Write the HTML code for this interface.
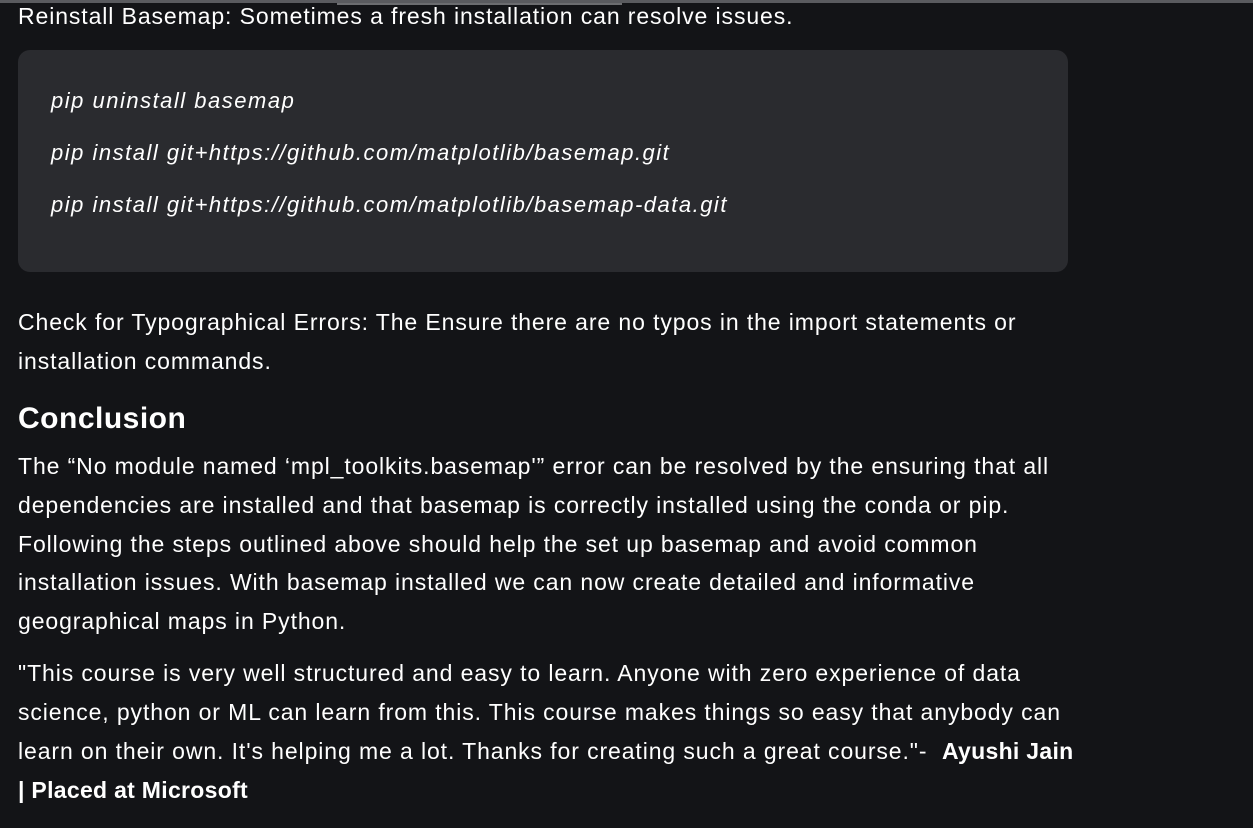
<!DOCTYPE html>
<html><head><style>
html,body{margin:0;padding:0;background:#131417;width:1253px;height:828px;overflow:hidden}
body{font-family:"Liberation Sans",sans-serif;color:#fff;font-size:23px;position:relative}
.topline{position:absolute;left:0;top:0;width:1253px;height:3px;background:#5a5b5f}
.topline2{position:absolute;left:337px;top:3px;width:285px;height:2px;background:#6c6d70}
.t{position:absolute;left:18px;white-space:nowrap;letter-spacing:0.9px;line-height:39px}
.code{position:absolute;left:18px;top:50px;width:1050px;height:222px;background:#2a2b2f;border-radius:12px}
.c{position:absolute;left:51px;font-style:italic;white-space:nowrap;letter-spacing:1.5px;font-size:22px}
h2{position:absolute;left:18px;top:402px;margin:0;font-size:30px;font-weight:bold;letter-spacing:0.5px}
b{font-weight:bold;letter-spacing:0.3px}
</style></head><body>
<div class="topline"></div><div class="topline2"></div>
<div class="t" style="top:-3px">Reinstall Basemap: Sometimes a fresh installation can resolve issues.</div>
<div class="code"></div>
<div class="c" style="top:88px">pip uninstall basemap</div>
<div class="c" style="top:140px">pip install git+https://github.com/matplotlib/basemap.git</div>
<div class="c" style="top:192px">pip install git+https://github.com/matplotlib/basemap-data.git</div>
<div class="t" style="top:303px">Check for Typographical Errors: The Ensure there are no typos in the import statements or</div>
<div class="t" style="top:342px">installation commands.</div>
<h2>Conclusion</h2>
<div class="t" style="top:447px">The “No module named ‘mpl_toolkits.basemap'” error can be resolved by the ensuring that all</div>
<div class="t" style="top:486px">dependencies are installed and that basemap is correctly installed using the conda or pip.</div>
<div class="t" style="top:525px">Following the steps outlined above should help the set up basemap and avoid common</div>
<div class="t" style="top:563px">installation issues. With basemap installed we can now create detailed and informative</div>
<div class="t" style="top:602px">geographical maps in Python.</div>
<div class="t" style="top:654px">"This course is very well structured and easy to learn. Anyone with zero experience of data</div>
<div class="t" style="top:693px">science, python or ML can learn from this. This course makes things so easy that anybody can</div>
<div class="t" style="top:732px">learn on their own. It's helping me a lot. Thanks for creating such a great course."-&nbsp; <b>Ayushi Jain</b></div>
<div class="t" style="top:771px"><b>| Placed at Microsoft</b></div>
</body></html>
